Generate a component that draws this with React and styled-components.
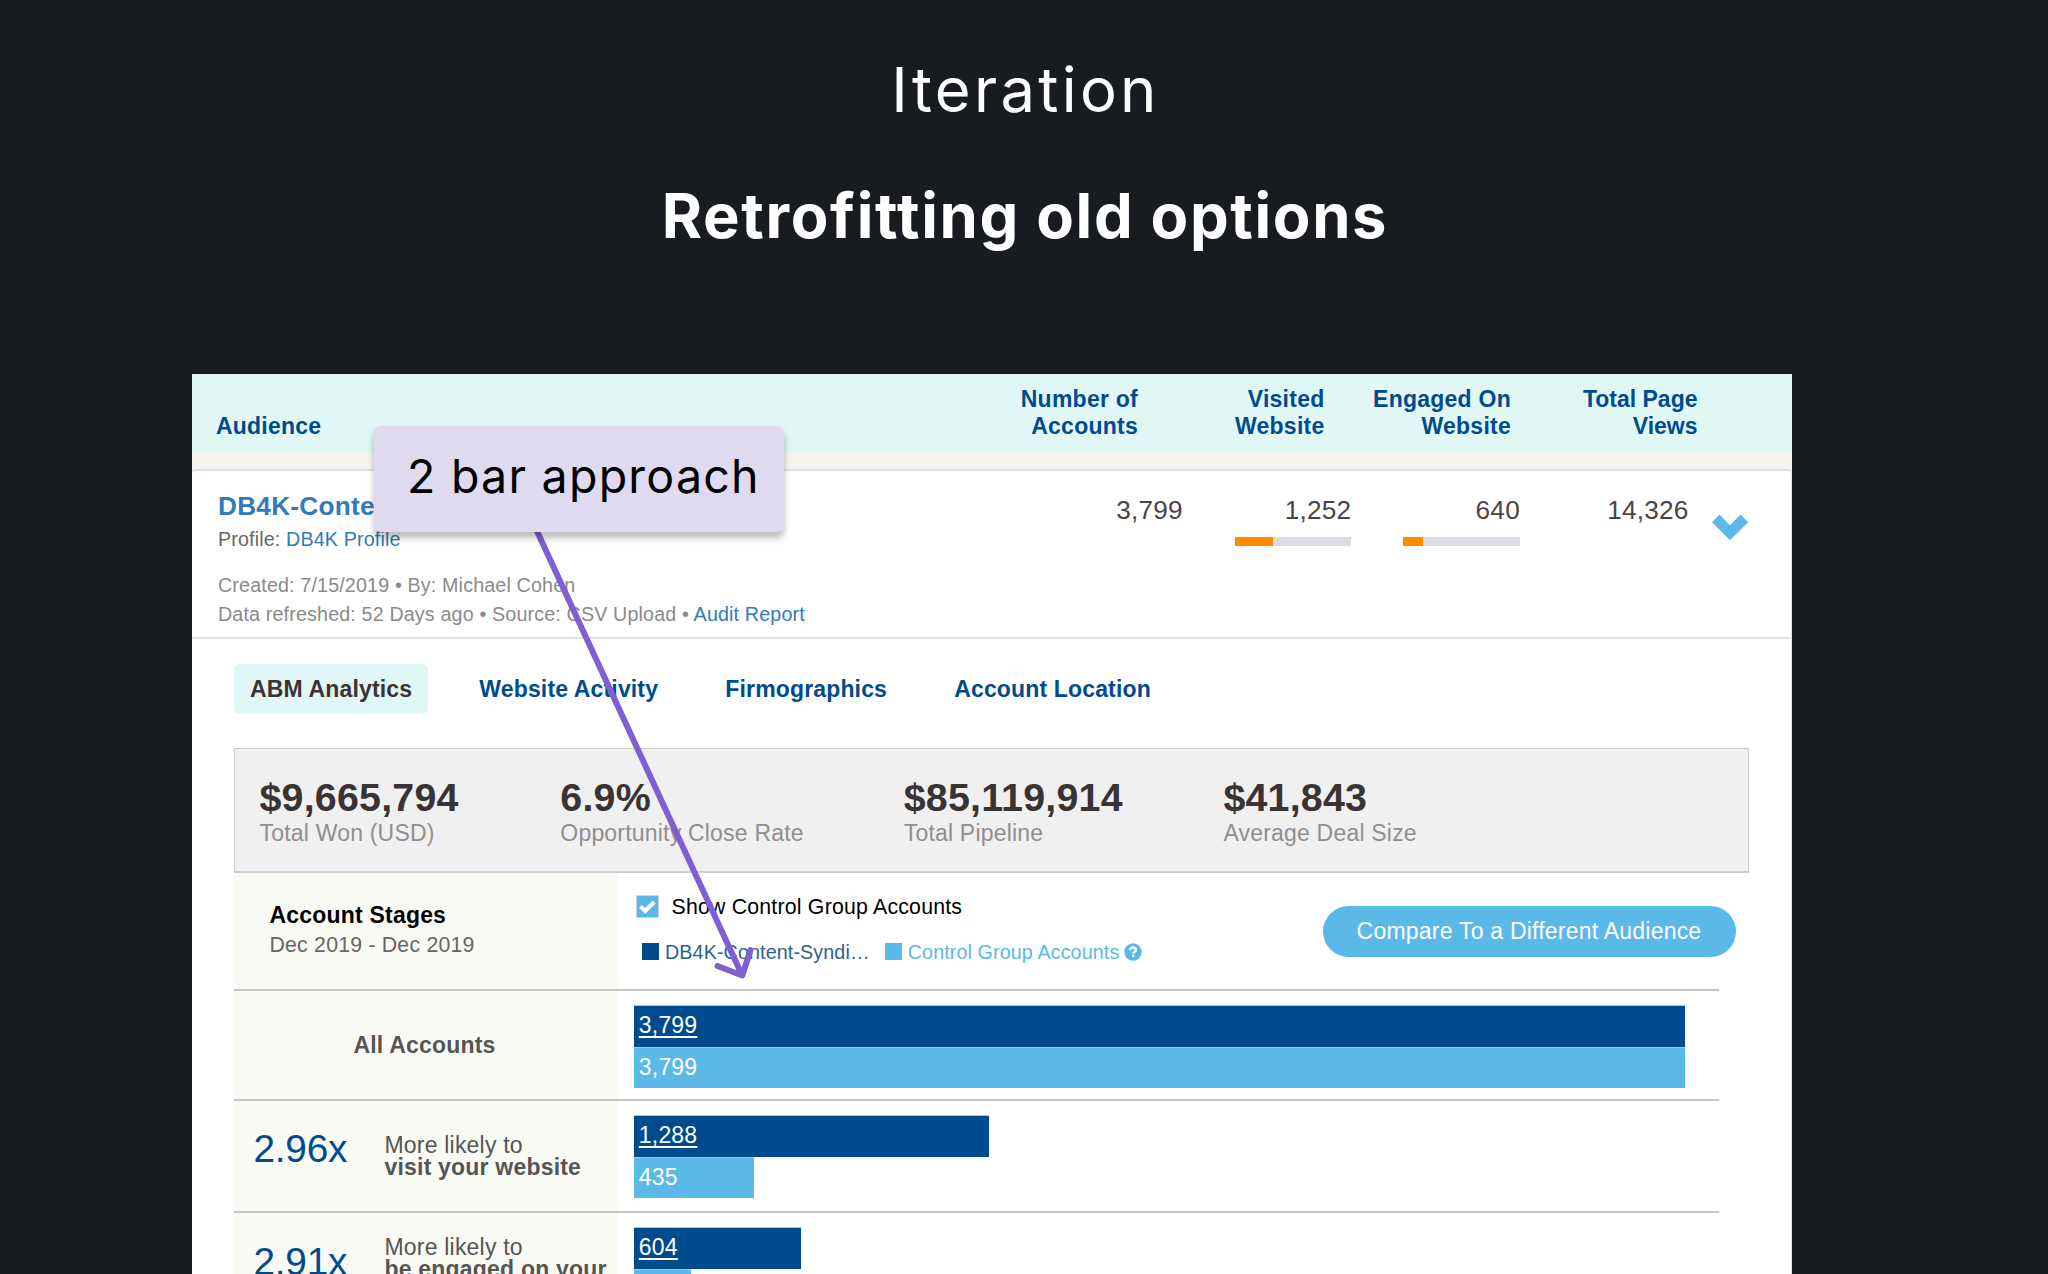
import React from "react";
import styled, { createGlobalStyle } from "styled-components";

const color = {
  page: "#181b20",
  navy: "#004b8d",
  sky: "#5bb9ea",
  link: "#337ab7",
  mint: "#e0f7f5",
  sand: "#f6f4ee",
  purple: "#805fd2",
};

const GlobalStyle = createGlobalStyle`
  * { box-sizing: border-box; }
  html, body { margin: 0; background: ${color.page}; }
  h1, h2, p { margin: 0; }
`;

const Page = styled.main`
  position: relative;
  width: 2048px;
  height: 1274px;
  overflow: hidden;
  background: ${color.page};
  font-family: "Liberation Sans", Arial, sans-serif;
  letter-spacing: 0.2px;
`;

/* ---------- Slide heading ---------- */

const Hero = styled.header`
  height: 374px;
  padding-top: 53px;
  color: #fff;
  text-align: center;
  font-family: Inter, sans-serif;
  font-size: 61.5px;
  line-height: 74px;
`;

const Eyebrow = styled.h2`
  padding-left: 3px;
  font-size: inherit;
  font-weight: 400;
  letter-spacing: 3.3px;
`;

const Title = styled.h1`
  margin-top: 52px;
  padding-left: 2px;
  font-size: inherit;
  font-weight: 700;
  letter-spacing: 1.65px;
`;

/* ---------- Audience card ---------- */

const Card = styled.section`
  width: 1600px;
  height: 910px;
  margin-left: 192px;
  background: #fff;
`;

const HeadRow = styled.div`
  display: flex;
  align-items: flex-end;
  height: 77px;
  padding: 0 94.5px 12px 24px;
  background: ${color.mint};
  color: ${color.navy};
  font-size: 23px;
  font-weight: 700;
  line-height: 26.4px;
`;

const HeadName = styled.div`
  flex: 1;
`;

const HeadCell = styled.div`
  width: 186.5px;
  text-align: right;
  white-space: pre-line;
  letter-spacing: ${(p) => (p.$tight ? "0" : "0.25px")};
`;

const Strip = styled.div`
  height: 18px;
  background: ${color.sand};
`;

const CardBody = styled.div`
  height: 815px;
  border: solid #dfe0ea;
  border-width: 2px 1.5px 0 0;
  border-radius: 5px 5px 0 0;
  background: #fff;
  box-shadow: 0 -6px 0 ${color.sand};
`;

const Details = styled.div`
  display: flex;
  height: 168px;
  padding: 20px 42.5px 0 26px;
  border-bottom: 2px solid #dfe0ea;
`;

const Info = styled.div`
  flex: 1;
  font-size: 19.7px;
  letter-spacing: 0.15px;
  color: #8a8a8a;
  line-height: 28.5px;
  white-space: nowrap;
`;

const AudienceName = styled.div`
  color: ${color.link};
  font-size: 26.2px;
  font-weight: 700;
  line-height: 30px;
  letter-spacing: 0.25px;
`;

const Profile = styled.div`
  margin: 5px 0 19px;
  color: #666;
  line-height: 26px;
`;

const Link = styled.span`
  color: ${color.link};
`;

const Metric = styled.div`
  display: flex;
  flex-direction: column;
  align-items: flex-end;
  gap: 12px;
  width: 168.6px;
  padding-top: 4px;
  color: #4a4444;
  font-size: 26.2px;
  line-height: 30px;
`;

const Meter = styled.div`
  width: 116.5px;
  height: 8.5px;
  background: linear-gradient(to right, #ff8c00 ${(p) => p.$value}%, #dcdde4 0);
`;

const Chevron = styled.svg`
  width: 38px;
  height: 28px;
  margin: 22px 0 0 22px;
`;

/* ---------- Tabs ---------- */

const Content = styled.div`
  padding: 25px 0 0 42px;
`;

const Tabs = styled.nav`
  display: flex;
  gap: 35.2px;
`;

const Tab = styled.div`
  height: 50px;
  padding: 0 16px;
  border-radius: 6px;
  background: ${(p) => (p.$active ? color.mint : "transparent")};
  color: ${(p) => (p.$active ? "#393333" : color.navy)};
  font-size: 23px;
  font-weight: 700;
  line-height: 50.5px;
  letter-spacing: 0.15px;
`;

/* ---------- Totals ---------- */

const Totals = styled.div`
  display: grid;
  grid-template-columns: 300.8px 343.4px 319.7px 1fr;
  width: 1515px;
  height: 125px;
  margin-top: 34px;
  padding: 26.5px 0 0 24.5px;
  border: 1.5px solid #cccfcf;
  border-bottom-width: 2px;
  background: #f1f0f1;
`;

const TotalValue = styled.div`
  color: #3a3333;
  font-size: 39.4px;
  font-weight: 700;
  line-height: 42px;
`;

const TotalLabel = styled.div`
  color: #8f8e8f;
  font-size: 23px;
  line-height: 30px;
`;

/* ---------- Stage chart ---------- */

const StageRow = styled.div`
  display: flex;
  width: 1485px;
  height: ${(p) => p.$height}px;
  border-bottom: 2px solid #c8c5ca;
`;

const StageLabel = styled.div`
  display: flex;
  flex-shrink: 0;
  width: 383px;
  align-items: center;
  justify-content: ${(p) => (p.$center ? "center" : "flex-start")};
  padding-right: ${(p) => (p.$center ? "2px" : "0")};
  background: #fafaf4;
  color: #555;
  font-size: 23px;
  line-height: 22.3px;
`;

const StageHeading = styled.div`
  padding: 0 0 3px 35.5px;
  color: #000;
  font-weight: 700;
  line-height: 30px;
`;

const StageDates = styled.div`
  color: #666;
  font-size: 21.3px;
  font-weight: 400;
`;

const Strong = styled.strong`
  font-weight: 700;
`;

const Ratio = styled.div`
  width: 150.5px;
  padding: 0 0 14px 19.4px;
  color: ${color.navy};
  font-size: 38.8px;
  letter-spacing: -0.2px;
`;

const Phrase = styled.div`
  display: flex;
  flex-direction: column;
  white-space: pre-line;
`;

const Bars = styled.div`
  padding: 14.3px 0 0 16.8px;
`;

const Bar = styled.div`
  height: 41.5px;
  padding-left: 5px;
  border-top: 1.5px solid #b9c3c8;
  background: ${(p) => (p.$control ? color.sky : color.navy)};
  color: #fff;
  font-size: 23px;
  line-height: 39px;
  text-decoration: ${(p) => (p.$control ? "none" : "underline 1.5px")};
  text-underline-offset: 3px;
`;

const Controls = styled.div`
  display: flex;
  flex: 1;
  align-items: flex-start;
  justify-content: space-between;
  margin-right: -17px;
  padding: 19px 0 0 19px;
`;

const CheckRow = styled.label`
  display: flex;
  align-items: center;
  gap: 12.5px;
  color: #000;
  font-size: 21.3px;
  line-height: 30px;
`;

const CheckIcon = styled.svg`
  width: 23px;
  height: 23px;
  margin-top: -2px;
`;

const Legend = styled.div`
  display: flex;
  gap: 15px;
  margin: 17px 0 0 6px;
`;

const LegendItem = styled.div`
  display: flex;
  align-items: center;
  gap: 6px;
  color: ${(p) => p.$color};
  font-size: 19.7px;
  line-height: 26px;
  letter-spacing: 0.12px;

  &::before {
    content: "";
    width: 17px;
    height: 17px;
    margin-top: -2px;
    background: ${(p) => p.$swatch};
  }
`;

const HelpIcon = styled.svg`
  width: 18px;
  height: 18px;
  margin-left: -1px;
`;

const CompareButton = styled.button`
  width: 413px;
  height: 50.5px;
  margin-top: 14px;
  padding: 0 1px 0 0;
  border: 0;
  border-radius: 26px;
  background: ${color.sky};
  color: #fff;
  font: 23px "Liberation Sans", Arial, sans-serif;
  letter-spacing: 0.22px;
`;

/* ---------- Annotation ---------- */

const Arrow = styled.svg`
  position: absolute;
  left: 520px;
  top: 525px;
  width: 250px;
  height: 465px;
`;

const Callout = styled.div`
  position: absolute;
  left: 374px;
  top: 426px;
  width: 410px;
  height: 106px;
  padding: 20px 0 0 33px;
  border-radius: 7px;
  background: #dfdaf0;
  box-shadow: 0 6px 7px rgba(0, 0, 0, 0.27);
  color: #000;
  font-family: Inter, sans-serif;
  font-size: 46.5px;
  line-height: 60px;
  letter-spacing: 1.25px;
`;

const columns = ["Number of\nAccounts", "Visited\nWebsite", "Engaged On\nWebsite", "Total Page\nViews"];

const metrics = [
  { value: "3,799" },
  { value: "1,252", meter: 33 },
  { value: "640", meter: 17 },
  { value: "14,326" },
];

const tabs = ["ABM Analytics", "Website Activity", "Firmographics", "Account Location"];

const totals = [
  ["$9,665,794", "Total Won (USD)"],
  ["6.9%", "Opportunity Close Rate"],
  ["$85,119,914", "Total Pipeline"],
  ["$41,843", "Average Deal Size"],
];

const stages = [
  { height: 110, audience: ["3,799", 1051.5], control: ["3,799", 1051.5] },
  { height: 112, ratio: "2.96x", phrase: "visit your website", audience: ["1,288", 355.6], control: ["435", 120.2] },
  { height: 114, ratio: "2.91x", phrase: "be engaged on your\nwebsite", audience: ["604", 167], control: ["207", 57] },
];

function Stage({ height, ratio, phrase, audience, control }) {
  return (
    <StageRow $height={height}>
      {ratio ? (
        <StageLabel>
          <Ratio>{ratio}</Ratio>
          <Phrase>
            <span>More likely to</span>
            <Strong>{phrase}</Strong>
          </Phrase>
        </StageLabel>
      ) : (
        <StageLabel $center>
          <Strong>All Accounts</Strong>
        </StageLabel>
      )}
      <Bars>
        <Bar style={{ width: audience[1] }}>{audience[0]}</Bar>
        <Bar $control style={{ width: control[1] }}>{control[0]}</Bar>
      </Bars>
    </StageRow>
  );
}

export default function App() {
  return (
    <Page>
      <GlobalStyle />
      <Hero>
        <Eyebrow>Iteration</Eyebrow>
        <Title>Retrofitting old options</Title>
      </Hero>

      <Card>
        <HeadRow>
          <HeadName>Audience</HeadName>
          {columns.map((c, i) => (
            <HeadCell key={c} $tight={i === 3}>{c}</HeadCell>
          ))}
        </HeadRow>
        <Strip />
        <CardBody>
          <Details>
            <Info>
              <AudienceName>DB4K-Content-Syndication</AudienceName>
              <Profile>
                Profile: <Link>DB4K Profile</Link>
              </Profile>
              <p>Created: 7/15/2019 • By: Michael Cohen</p>
              <p>
                Data refreshed: 52 Days ago • Source: CSV Upload • <Link>Audit Report</Link>
              </p>
            </Info>
            {metrics.map(({ value, meter }) => (
              <Metric key={value}>
                {value}
                {meter && <Meter $value={meter} />}
              </Metric>
            ))}
            <Chevron viewBox="0 0 38 28">
              <path d="M1 9.2 8.5 1.5 19 12.2 29.5 1.5 37.2 9.2 19 27.2Z" fill={color.sky} />
            </Chevron>
          </Details>

          <Content>
            <Tabs>
              {tabs.map((t, i) => (
                <Tab key={t} $active={i === 0}>{t}</Tab>
              ))}
            </Tabs>

            <Totals>
              {totals.map(([value, label]) => (
                <div key={label}>
                  <TotalValue>{value}</TotalValue>
                  <TotalLabel>{label}</TotalLabel>
                </div>
              ))}
            </Totals>

            <StageRow $height={118}>
              <StageLabel>
                <StageHeading>
                  Account Stages
                  <StageDates>Dec 2019 - Dec 2019</StageDates>
                </StageHeading>
              </StageLabel>
              <Controls>
                <div>
                  <CheckRow>
                    <CheckIcon viewBox="0 0 23 23">
                      <rect x="0.5" y="0.5" width="22" height="22" rx="1" fill={color.sky} stroke="#c9d3d9" />
                      <path d="M4.5 11.5 9.3 16 18.2 7" fill="none" stroke="#fff" strokeWidth="4" />
                    </CheckIcon>
                    Show Control Group Accounts
                  </CheckRow>
                  <Legend>
                    <LegendItem $color="#2c5f94" $swatch={color.navy}>DB4K-Content-Syndi…</LegendItem>
                    <LegendItem $color={color.sky} $swatch={color.sky}>
                      Control Group Accounts
                      <HelpIcon viewBox="0 0 18 18">
                        <circle cx="9" cy="9" r="8.7" fill={color.sky} />
                        <path d="M6 7.2C6.2 5.3 7.4 4.5 9 4.5c1.7 0 3 .9 3 2.4 0 2-2.8 2-2.8 3.8" fill="none" stroke="#fff" strokeWidth="2.4" />
                        <rect x="8" y="11.9" width="2.4" height="2.3" fill="#fff" />
                      </HelpIcon>
                    </LegendItem>
                  </Legend>
                </div>
                <CompareButton>Compare To a Different Audience</CompareButton>
              </Controls>
            </StageRow>

            {stages.map((s) => (
              <Stage key={s.height} {...s} />
            ))}
          </Content>
        </CardBody>
      </Card>

      <Arrow viewBox="520 525 250 465" fill="none" stroke={color.purple} strokeWidth="6">
        <path d="M536 529 742 975" />
        <path d="M717.5 966 742.3 975.5 750.5 950" strokeLinecap="round" strokeLinejoin="round" />
      </Arrow>
      <Callout>2 bar approach</Callout>
    </Page>
  );
}
